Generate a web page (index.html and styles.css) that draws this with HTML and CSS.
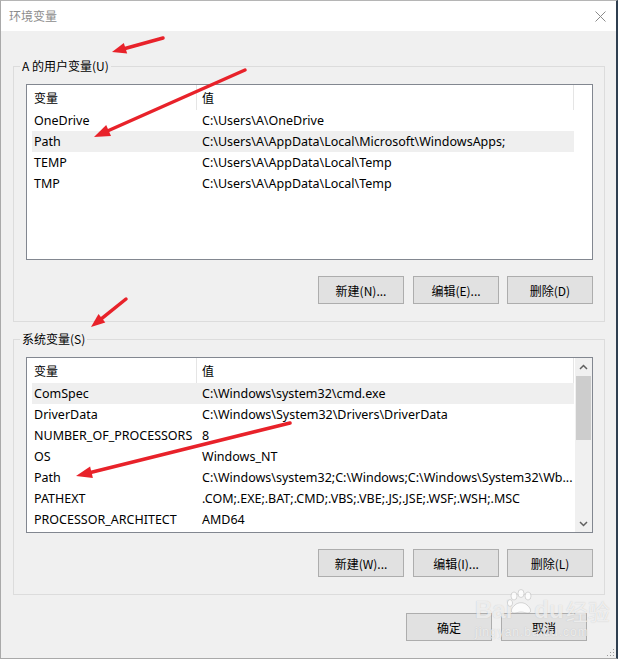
FILE: index.html
```html
<!DOCTYPE html>
<html lang="zh-CN">
<head>
<meta charset="utf-8">
<title>环境变量</title>
<link rel="stylesheet" href="styles.css">
</head>
<body>
<div class="window">
  <div class="titlebar">
    <span class="title">环境变量</span>
    <svg class="close" width="11" height="11" viewBox="0 0 11 11"><path d="M0.5 0.5L10.5 10.5M10.5 0.5L0.5 10.5" stroke="#8a8a8a" stroke-width="1" fill="none"/></svg>
  </div>
  <div class="content">
    <fieldset class="group">
      <legend class="legend">A 的用户变量(U)</legend>
      <div class="list">
        <div class="rows">
          <div class="row header"><div class="c1 h">变量</div><div class="c2 h">值</div></div>
          <div class="row"><div class="c1">OneDrive</div><div class="c2">C:\Users\A\OneDrive</div></div>
          <div class="row sel"><div class="c1">Path</div><div class="c2">C:\Users\A\AppData\Local\Microsoft\WindowsApps;</div></div>
          <div class="row"><div class="c1">TEMP</div><div class="c2">C:\Users\A\AppData\Local\Temp</div></div>
          <div class="row"><div class="c1">TMP</div><div class="c2">C:\Users\A\AppData\Local\Temp</div></div>
        </div>
      </div>
      <div class="buttons">
        <div class="btn">新建(N)...</div>
        <div class="btn">编辑(E)...</div>
        <div class="btn">删除(D)</div>
      </div>
    </fieldset>

    <fieldset class="group second">
      <legend class="legend">系统变量(S)</legend>
      <div class="list">
        <div class="rows">
          <div class="row header"><div class="c1 h">变量</div><div class="c2 h">值</div></div>
          <div class="row sel"><div class="c1">ComSpec</div><div class="c2">C:\Windows\system32\cmd.exe</div></div>
          <div class="row"><div class="c1">DriverData</div><div class="c2">C:\Windows\System32\Drivers\DriverData</div></div>
          <div class="row"><div class="c1">NUMBER_OF_PROCESSORS</div><div class="c2">8</div></div>
          <div class="row"><div class="c1">OS</div><div class="c2">Windows_NT</div></div>
          <div class="row"><div class="c1">Path</div><div class="c2">C:\Windows\system32;C:\Windows;C:\Windows\System32\Wb...</div></div>
          <div class="row"><div class="c1">PATHEXT</div><div class="c2">.COM;.EXE;.BAT;.CMD;.VBS;.VBE;.JS;.JSE;.WSF;.WSH;.MSC</div></div>
          <div class="row"><div class="c1">PROCESSOR_ARCHITECT</div><div class="c2">AMD64</div></div>
        </div>
        <div class="scrollbar">
          <div class="arrow"><svg width="9" height="6" viewBox="0 0 9 6"><path d="M1 5L4.5 1.5L8 5" stroke="#606060" stroke-width="1.5" fill="none"/></svg></div>
          <div class="track"><div class="thumb"></div></div>
          <div class="arrow"><svg width="9" height="6" viewBox="0 0 9 6"><path d="M1 1L4.5 4.5L8 1" stroke="#606060" stroke-width="1.5" fill="none"/></svg></div>
        </div>
      </div>
      <div class="buttons">
        <div class="btn">新建(W)...</div>
        <div class="btn">编辑(I)...</div>
        <div class="btn">删除(L)</div>
      </div>
    </fieldset>

    <div class="footer">
      <div class="btn">确定</div>
      <div class="btn">取消</div>
    </div>
  </div>

  <div class="watermark">
    <div class="wm-main">Bai<svg class="paw" width="30" height="28" viewBox="0 0 30 28"><g fill="rgba(255,255,255,0.8)" stroke="rgba(150,150,150,0.45)" stroke-width="0.8"><ellipse cx="8" cy="7" rx="3" ry="4"/><ellipse cx="15" cy="4.5" rx="3" ry="4"/><ellipse cx="22" cy="7" rx="3" ry="4"/><ellipse cx="4" cy="14" rx="2.6" ry="3.4"/><path d="M8 24C4 24 5 19 9 16C12 13 18 13 21 16C25 19 26 24 22 24C19 24 18 23 15 23C12 23 11 24 8 24Z"/></g></svg>du<span class="wm-cn">经验</span></div>
    <div class="wm-sub">jingyan.baidu.com</div>
  </div>

  <svg class="grip" width="10" height="10" viewBox="0 0 10 10">
    <rect x="8" y="2" width="1" height="1" fill="#9a9a9a"/>
    <rect x="5" y="5" width="1" height="1" fill="#9a9a9a"/>
    <rect x="8" y="5" width="1" height="1" fill="#9a9a9a"/>
    <rect x="2" y="8" width="1" height="1" fill="#9a9a9a"/>
    <rect x="5" y="8" width="1" height="1" fill="#9a9a9a"/>
    <rect x="8" y="8" width="1" height="1" fill="#9a9a9a"/>
  </svg>

  <svg class="arrows" width="618" height="659" viewBox="0 0 618 659">
    <g stroke="#e8222a" stroke-width="3.5" stroke-linecap="round" fill="none">
      <path d="M163 38L125 48.5"/>
      <path d="M245 70L108.6 130.5"/>
      <path d="M126 299L101.9 318.3"/>
      <path d="M290 423L91.5 472.2"/>
    </g>
    <g fill="#e8222a">
      <polygon points="112,52 127.2,53.6 123.8,43"/>
      <polygon points="94,137 111,136 106.2,125"/>
      <polygon points="91,327 105.3,322.5 98.5,313.9"/>
      <polygon points="76,476 92.9,478 90.1,466.4"/>
    </g>
  </svg>
</div>
</body>
</html>
```

FILE: styles.css
```css
* { box-sizing: border-box; }

html, body {
  margin: 0;
  padding: 0;
  background: #2b3a4a;
}

body {
  width: 618px;
  height: 659px;
  overflow: hidden;
  font-family: "Noto Sans", "Noto Sans CJK SC", sans-serif;
  font-size: 12px;
  color: #000;
}

.window {
  position: relative;
  width: 618px;
  height: 659px;
  border-left: 1px solid #a9a9a9;
  border-bottom: 1px solid #a9a9a9;
  border-right: 2px solid #2f3f50;
  border-top: 1px solid #b5b5b5;
  background: #f0f0f0;
  display: flex;
  flex-direction: column;
  overflow: hidden;
}

.titlebar {
  height: 30px;
  background: #fff;
  display: flex;
  align-items: center;
  justify-content: space-between;
  padding: 0 10px 0 8px;
  flex: none;
}

.title {
  color: #8c8c8c;
  font-family: "Noto Sans CJK SC", sans-serif;
  font-size: 12px;
  line-height: 16px;
}

.close { display: block; }

.content {
  flex: 1;
  padding: 27px 11px 0 12px;
  display: flex;
  flex-direction: column;
}

.group {
  margin: 0;
  padding: 10px 11px 17px 12px;
  border: 1px solid #dcdcdc;
  min-width: 0;
}

.group.second {
  margin-top: 9px;
}

.legend {
  padding: 0 2px;
  margin-left: -6px;
  line-height: 16px;
  font-family: "Noto Sans CJK SC", sans-serif;
  font-size: 12px;
}

.list {
  height: 176px;
  border: 1px solid #828790;
  background: #fff;
  display: flex;
  padding-left: 5px;
}

.rows {
  width: 542px;
  flex: none;
  font-size: 12.5px;
}

.row {
  display: flex;
  height: 21px;
  align-items: center;
  white-space: nowrap;
}

.row.sel { background: #efefef; }

.row.header { height: 25px; }

.c1 {
  width: 166px;
  padding-left: 2px;
  overflow: hidden;
  flex: none;
}

.c2 {
  flex: 1;
  padding-left: 4px;
  overflow: hidden;
}

.h {
  height: 100%;
  display: flex;
  align-items: center;
  font-family: "Noto Sans CJK SC", sans-serif;
  font-size: 12px;
  border-right: 1px solid #e5e5e5;
}

.h.c1 { width: 165px; }
.h.c2 { padding-left: 5px; }

.scrollbar {
  width: 17px;
  margin-left: auto;
  background: #f0f0f0;
  display: flex;
  flex-direction: column;
}

.arrow {
  height: 17px;
  display: flex;
  align-items: center;
  justify-content: center;
  flex: none;
}

.track {
  flex: 1;
  padding: 1px 1px 0 1px;
}

.thumb {
  height: 64px;
  background: #cdcdcd;
}

.buttons {
  display: flex;
  justify-content: flex-end;
  gap: 8px;
  margin-top: 16px;
}

.btn {
  width: 86px;
  height: 28px;
  background: #e1e1e1;
  border: 1px solid #adadad;
  display: flex;
  align-items: center;
  justify-content: center;
  font-family: "Noto Sans CJK SC", sans-serif;
  font-size: 12px;
}

.buttons .btn:first-child { margin-right: 1px; }

.footer {
  display: flex;
  justify-content: flex-end;
  gap: 9px;
  margin-top: 18px;
  padding-right: 18px;
}

.watermark {
  position: absolute;
  left: 474px;
  top: 594px;
  color: rgba(255, 255, 255, 0.7);
  text-shadow: 0 0 1px rgba(140, 140, 140, 0.45);
  pointer-events: none;
  font-family: "Liberation Sans", sans-serif;
  white-space: nowrap;
}

.wm-main {
  font-size: 24px;
  font-weight: bold;
  line-height: 30px;
  display: flex;
  align-items: flex-end;
}

.wm-main .paw {
  margin: 0 -2px -4px -6px;
  align-self: flex-start;
  position: relative;
  top: -6px;
}

.wm-cn {
  font-family: "Noto Sans CJK SC", sans-serif;
  font-size: 22px;
  font-weight: normal;
  margin-left: 2px;
}

.wm-sub {
  font-size: 12px;
  line-height: 14px;
  letter-spacing: 1px;
}

.grip {
  position: absolute;
  right: 1px;
  bottom: 1px;
}

.arrows {
  position: absolute;
  left: -1px;
  top: -1px;
  pointer-events: none;
}
```
